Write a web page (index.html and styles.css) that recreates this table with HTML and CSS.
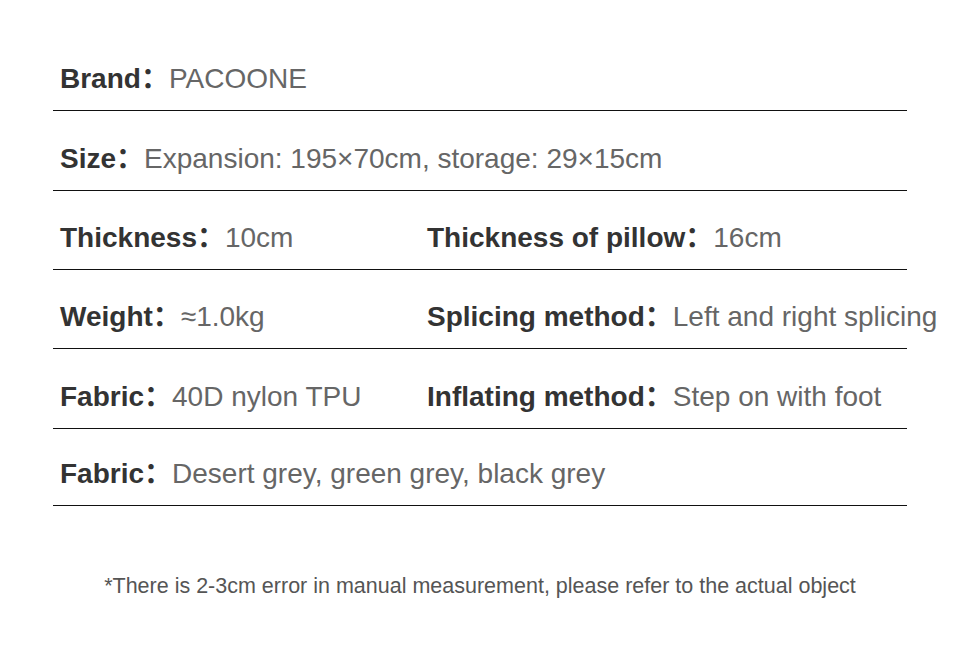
FILE: index.html
```html
<!DOCTYPE html>
<html lang="en">
<head>
<meta charset="utf-8">
<title>Specs</title>
<link rel="stylesheet" href="styles.css">
</head>
<body>
<div class="spec">
  <div class="row"><div class="cell"><span class="k">Brand：</span><span class="v">PACOONE</span></div></div>
  <div class="row"><div class="cell"><span class="k">Size：</span><span class="v">Expansion: 195×70cm, storage: 29×15cm</span></div></div>
  <div class="row two"><div class="cell"><span class="k">Thickness：</span><span class="v">10cm</span></div><div class="cell"><span class="k">Thickness of pillow：</span><span class="v">16cm</span></div></div>
  <div class="row two"><div class="cell"><span class="k">Weight：</span><span class="v">≈1.0kg</span></div><div class="cell"><span class="k">Splicing method：</span><span class="v">Left and right splicing</span></div></div>
  <div class="row two"><div class="cell"><span class="k">Fabric：</span><span class="v">40D nylon TPU</span></div><div class="cell"><span class="k">Inflating method：</span><span class="v">Step on with foot</span></div></div>
  <div class="row"><div class="cell"><span class="k">Fabric：</span><span class="v">Desert grey, green grey, black grey</span></div></div>
</div>
<p class="note">*There is 2-3cm error in manual measurement, please refer to the actual object</p>
</body>
</html>
```
FILE: styles.css
```css
html, body {
  margin: 0;
  padding: 0;
  background: #fff;
}
body {
  font-family: "Liberation Sans", Arial, "Noto Sans CJK SC", sans-serif;
  width: 960px;
  height: 647px;
  overflow: hidden;
}
.spec {
  margin: 0 0 0 53px;
  width: 854px;
  padding-top: 32px;
}
.row {
  display: grid;
  grid-template-columns: 1fr;
  padding: 31px 0 15px 7px;
  line-height: 32px;
  border-bottom: 1px solid #111;
  white-space: nowrap;
}
.row:nth-child(2),
.row:nth-child(5) {
  padding-top: 32px;
}
.row:last-child {
  padding-top: 29px;
}
.row.two {
  grid-template-columns: 367px 1fr;
}
.cell {
  font-size: 28px;
}
.k {
  font-weight: bold;
  color: #333;
}
.v {
  color: #666;
}
.note {
  margin: 68px 0 0;
  text-align: center;
  font-size: 21.5px;
  color: #555;
  line-height: 24px;
}
```
